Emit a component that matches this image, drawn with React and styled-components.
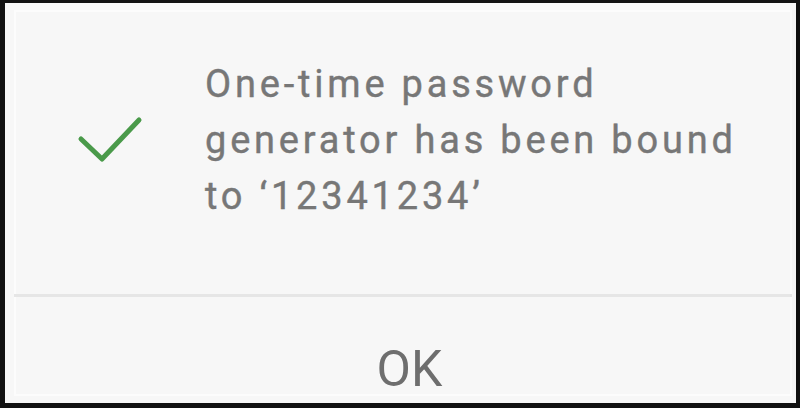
import React from "react";
import styled, { createGlobalStyle } from "styled-components";

const Global = createGlobalStyle`
  html, body { margin: 0; padding: 0; background: #000; }
  * { box-sizing: border-box; }
`;

const Frame = styled.div`
  width: 800px;
  height: 408px;
  border-style: solid;
  border-color: #111;
  border-width: 3px 4px 5px 5px;
  background: #f7f7f7;
  font-family: Roboto, "Noto Sans", sans-serif;
  display: flex;
  flex-direction: column;
`;

const Inner = styled.div`
  flex: 1;
  margin: 7px 4px 12px 9px;
  border: 2px solid #fcfcfc;
  display: flex;
  flex-direction: column;
`;

const Content = styled.div`
  height: 282px;
  display: flex;
  align-items: center;
  padding: 0 0 26px 57px;
`;

const Check = styled.svg`
  width: 70px;
  height: 50px;
  flex: none;
`;

const Message = styled.p`
  margin: 0 0 0 62px;
  font-size: 38px;
  line-height: 56px;
  color: #777;
  letter-spacing: 3.8px;
  -webkit-text-stroke: 0.4px #777;
`;

const Divider = styled.div`
  height: 3px;
  background: #e6e6e6;
  margin: 0 -2px;
`;

const Button = styled.div`
  flex: 1;
  display: flex;
  justify-content: center;
  padding: 47px 0 0 13px;
  font-size: 50px;
  line-height: 50px;
  color: #6e6e6e;
`;

export default function App() {
  return (
    <>
      <Global />
      <Frame>
        <Inner>
          <Content>
            <Check viewBox="0 0 70 50">
              <path
                d="M8 24 L29 44 L66 5"
                fill="none"
                stroke="#4a9a4a"
                strokeWidth="5"
                strokeLinecap="round"
                strokeLinejoin="round"
              />
            </Check>
            <Message>
              One-time password
              <br />
              generator has been bound
              <br />
              to ‘12341234’
            </Message>
          </Content>
          <Divider />
          <Button>OK</Button>
        </Inner>
      </Frame>
    </>
  );
}
